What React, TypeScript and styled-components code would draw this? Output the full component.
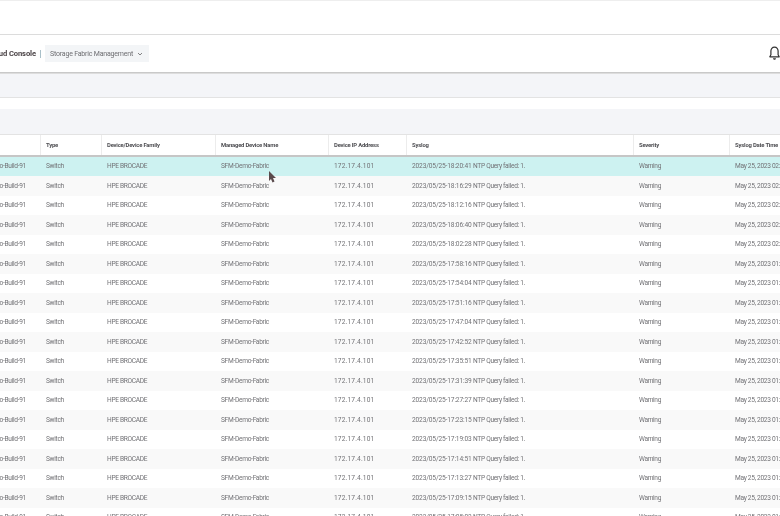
import React from "react";
import styled, { createGlobalStyle } from "styled-components";

const Global = createGlobalStyle`
  html, body { margin: 0; padding: 0; background: #fff; overflow: hidden; }
  body { font-family: Roboto, "Liberation Sans", sans-serif; }
`;

const Viewport = styled.div`
  position: relative;
  width: 780px;
  height: 516px;
  overflow: hidden;
  background: #fff;
`;

const Page = styled.div`
  width: 900px;
  margin-left: -100px;
  filter: blur(0.35px);
`;

const TopBand = styled.div`
  height: 33px;
  border-top: 1px solid #eeeeee;
  border-bottom: 1px solid #dcdcdc;
`;

const ConsoleBar = styled.div`
  height: 37px;
  display: flex;
  align-items: center;
  padding-right: 20px;
  border-bottom: 1px solid #c9c9c9;
  box-shadow: 0 1px 0 #dddddd;
  position: relative;
`;

const Brand = styled.div`
  width: 136px;
  text-align: right;
  white-space: nowrap;
  font-size: 7.6px;
  font-weight: 700;
  letter-spacing: -0.1px;
  color: #4a4346;
`;

const Divider = styled.span`
  width: 1px;
  height: 8px;
  margin: 0 4px 0 4px;
  background: #a9c0c9;
`;

const Pill = styled.div`
  width: 104px;
  height: 17px;
  box-sizing: border-box;
  padding: 0 6px 0 5px;
  display: flex;
  align-items: center;
  justify-content: space-between;
  background: #f3f5f7;
  font-size: 7px;
  letter-spacing: -0.2px;
  color: #6e6e72;
  white-space: nowrap;
`;

const Bell = styled.svg`
  width: 11px;
  height: 15px;
  margin-left: auto;
  color: #333;
`;

const Strip = styled.div<{ $h: number }>`
  height: ${(p) => p.$h}px;
  background: #f4f5f8;
  border-bottom: 1px solid #e3e3e3;
`;

const Gap = styled.div`
  height: 11px;
`;

const columns = "141px 61px 114px 113px 78px 227px 96px 70px";

const HeaderRow = styled.div`
  display: grid;
  grid-template-columns: ${columns};
  height: 19.5px;
  border-bottom: 2px solid #c6c6c6;
`;

const HeaderCell = styled.div`
  display: flex;
  align-items: center;
  padding-left: 5px;
  border-right: 1px solid #ececec;
  font-size: 5.9px;
  font-weight: 700;
  letter-spacing: -0.2px;
  color: #4f4f53;
  white-space: nowrap;
  overflow: hidden;
`;

const Row = styled.div<{ $tone: "hi" | "alt" | "plain" }>`
  display: grid;
  grid-template-columns: ${columns};
  height: 19.5px;
  background: ${(p) =>
    p.$tone === "hi" ? "#cdf2f1" : p.$tone === "alt" ? "#f9f9f9" : "#ffffff"};
`;

const Cell = styled.div<{ $first?: boolean }>`
  display: flex;
  align-items: center;
  justify-content: ${(p) => (p.$first ? "flex-end" : "flex-start")};
  padding-left: 5px;
  padding-right: ${(p) => (p.$first ? "15px" : "0")};
  font-size: 6.6px;
  letter-spacing: -0.3px;
  color: #727276;
  white-space: nowrap;
  overflow: hidden;
`;

const Address = styled.span`
  letter-spacing: 0.15px;
`;

const Stamp = styled.span`
  width: 61px;
  letter-spacing: -0.15px;
`;

const Cursor = styled.svg`
  position: absolute;
  left: 268px;
  top: 170px;
  width: 9px;
  height: 14px;
`;

const headers = [
  "",
  "Type",
  "Device/Device Family",
  "Managed Device Name",
  "Device IP Address",
  "Syslog",
  "Severity",
  "Syslog Date Time",
];

const times = [
  "18:20:41", "18:16:29", "18:12:16", "18:06:40", "18:02:28", "17:58:16",
  "17:54:04", "17:51:16", "17:47:04", "17:42:52", "17:35:51", "17:31:39",
  "17:27:27", "17:23:15", "17:19:03", "17:14:51", "17:13:27", "17:09:15", "17:05:03",
];

export default function App() {
  return (
    <Viewport>
      <Global />
      <Page>
        <TopBand />
        <ConsoleBar>
          <Brand>HPE GreenLake Cloud Console</Brand>
          <Divider />
          <Pill>
            Storage Fabric Management
            <svg width="6" height="4" viewBox="0 0 6 4" fill="none">
              <path d="M1 1l2 2 2-2" stroke="#666" strokeWidth="0.8" />
            </svg>
          </Pill>
          <Bell viewBox="0 0 11 15" fill="none">
            <path
              d="M5.5 1.2c-2.3 0-3.6 1.7-3.6 3.9v3.6L.8 10.8h9.4L9.1 8.7V5.1c0-2.2-1.3-3.9-3.6-3.9z"
              stroke="currentColor"
              strokeWidth="1.2"
              strokeLinejoin="round"
            />
            <path d="M4 12.2c.2 1 .8 1.5 1.5 1.5s1.3-.5 1.5-1.5z" fill="currentColor" />
          </Bell>
        </ConsoleBar>
        <Strip $h={24} />
        <Gap />
        <Strip $h={25} />
        <HeaderRow>
          {headers.map((h, i) => (
            <HeaderCell key={i}>{h}</HeaderCell>
          ))}
        </HeaderRow>
        {times.map((t, i) => (
          <Row key={t} $tone={i === 0 ? "hi" : i % 2 ? "alt" : "plain"}>
            <Cell $first>SFM-Demo-Build-91</Cell>
            <Cell>Switch</Cell>
            <Cell>HPE BROCADE</Cell>
            <Cell>SFM-Demo-Fabric</Cell>
            <Cell>
              <Address>172.17.4.101</Address>
            </Cell>
            <Cell>
              <Stamp>2023/05/25-{t}</Stamp>
              <span>NTP Query failed: 1.</span>
            </Cell>
            <Cell>Warning</Cell>
            <Cell>May 25, 2023 {t.startsWith("18") ? "02" : "01"}:20:41 PM</Cell>
          </Row>
        ))}
      </Page>
      <Cursor viewBox="0 0 9 14">
        <path d="M1 1l0 10 2-2 1.5 3.5 2-1L5 8h3z" fill="#5a4a4c" />
      </Cursor>
    </Viewport>
  );
}
